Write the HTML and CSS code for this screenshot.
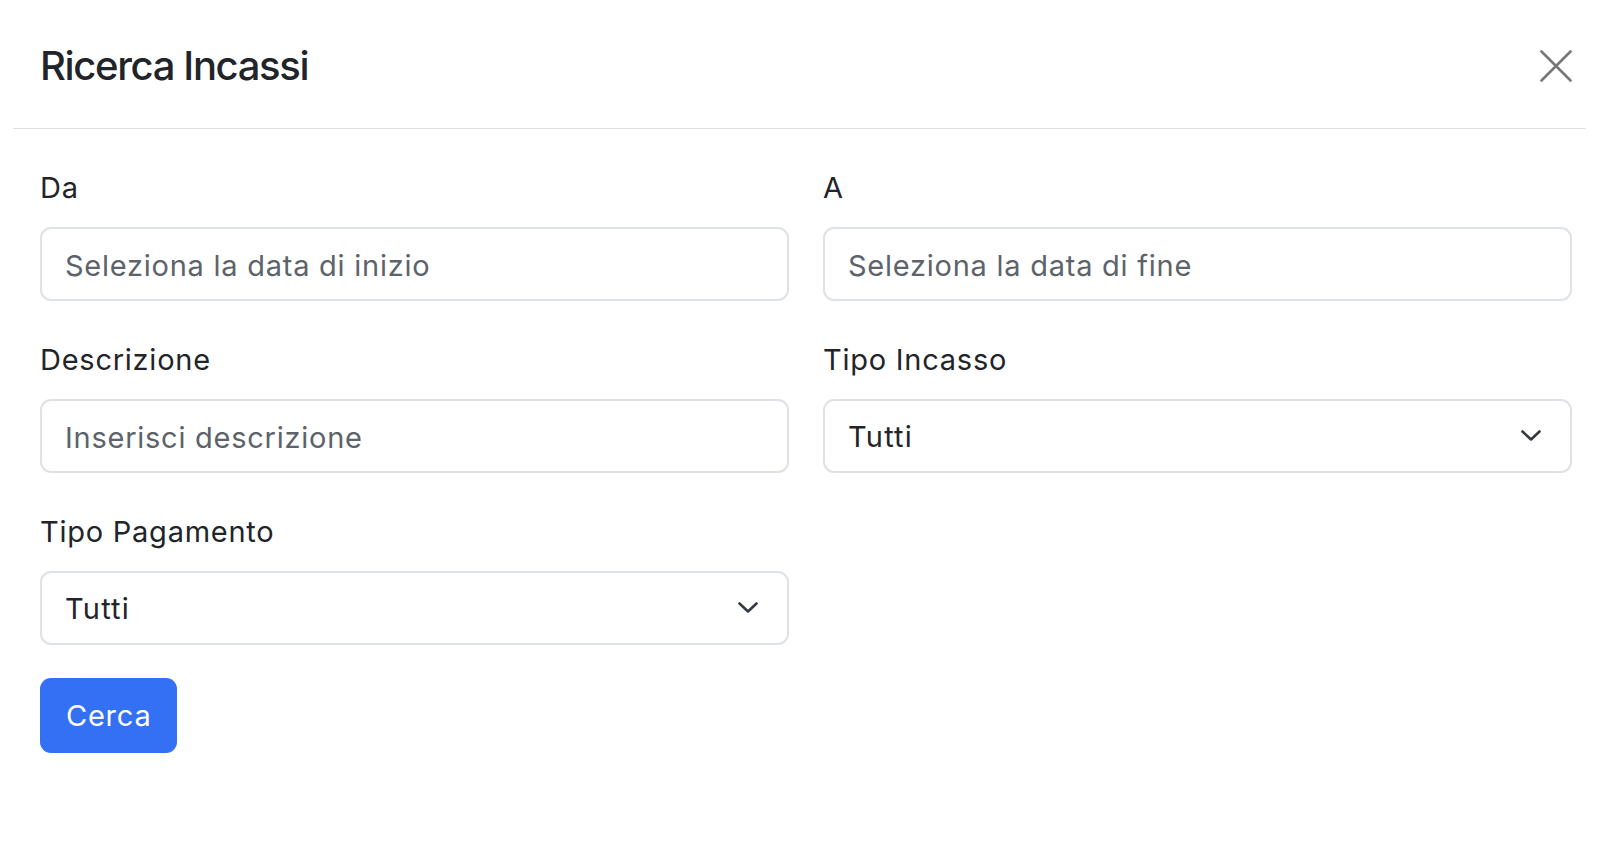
FILE: index.html
```html
<!DOCTYPE html>
<html lang="it">
<head>
<meta charset="utf-8">
<title>Ricerca Incassi</title>
<link rel="stylesheet" href="styles.css">
</head>
<body>
<div class="modal">
  <div class="modal-header">
    <h4 class="modal-title">Ricerca Incassi</h4>
    <button class="btn-close" type="button" aria-label="Chiudi">
      <svg width="32" height="32" viewBox="0 0 32 32"><path d="M1.5 1.5 L30.5 30.5 M30.5 1.5 L1.5 30.5" stroke="#777" stroke-width="2.6" stroke-linecap="round" fill="none"/></svg>
    </button>
  </div>
  <form class="modal-body">
    <div class="grid">
      <div class="field">
        <label class="label">Da</label>
        <input class="control" type="text" placeholder="Seleziona la data di inizio">
      </div>
      <div class="field">
        <label class="label">A</label>
        <input class="control" type="text" placeholder="Seleziona la data di fine">
      </div>
      <div class="field">
        <label class="label">Descrizione</label>
        <input class="control" type="text" placeholder="Inserisci descrizione">
      </div>
      <div class="field">
        <label class="label">Tipo Incasso</label>
        <div class="select-wrap">
          <select class="control select"><option>Tutti</option></select>
          <svg class="chev" width="20" height="11" viewBox="0 0 20 11"><path d="M1.5 1.5 L10 9.5 L18.5 1.5" stroke="#343a40" stroke-width="2.6" stroke-linecap="round" stroke-linejoin="round" fill="none"/></svg>
        </div>
      </div>
      <div class="field">
        <label class="label">Tipo Pagamento</label>
        <div class="select-wrap">
          <select class="control select"><option>Tutti</option></select>
          <svg class="chev" width="20" height="11" viewBox="0 0 20 11"><path d="M1.5 1.5 L10 9.5 L18.5 1.5" stroke="#343a40" stroke-width="2.6" stroke-linecap="round" stroke-linejoin="round" fill="none"/></svg>
        </div>
      </div>
    </div>
    <div class="actions">
      <button class="btn-primary" type="button">Cerca</button>
    </div>
  </form>
</div>
</body>
</html>
```

FILE: styles.css
```css
* { box-sizing: border-box; }
html, body { margin: 0; padding: 0; background: #fff; }
body {
  font-family: Inter, "Liberation Sans", sans-serif;
  color: #212529;
  font-size: 29px;
  letter-spacing: 0.75px;
}
.modal {
  margin: 0 26px 0 13px;
}
.modal-header {
  display: flex;
  align-items: center;
  justify-content: space-between;
  padding: 42px 14px 38px 27px;
  border-bottom: 1px solid #dee2e6;
}
.modal-title {
  margin: 0;
  font-size: 40px;
  line-height: 48px;
  font-weight: 500;
  letter-spacing: -1.35px;
}
.btn-close {
  border: 0;
  background: none;
  padding: 0;
  width: 32px;
  height: 32px;
  display: flex;
}
.modal-body {
  padding: 38px 14px 0 27px;
}
.grid {
  display: grid;
  grid-template-columns: 1fr 1fr;
  column-gap: 34px;
  row-gap: 38px;
}
.field {
  display: flex;
  flex-direction: column;
}
.label {
  font-size: 29px;
  line-height: 42px;
  margin-bottom: 18px;
}
.control {
  width: 100%;
  height: 74px;
  border: 2px solid #dee2e6;
  border-radius: 11px;
  background: #fff;
  font-family: Inter, "Liberation Sans", sans-serif;
  font-size: 29px;
  letter-spacing: 0.75px;
  color: #212529;
  padding: 2px 23px 0 23px;
  outline: none;
  margin: 0;
}
.control::placeholder {
  color: #5c636a;
  opacity: 1;
}
.select-wrap {
  position: relative;
}
.select {
  appearance: none;
  -webkit-appearance: none;
  padding: 0 60px 0 23px;
  letter-spacing: 1.2px;
}
.chev {
  position: absolute;
  right: 31px;
  top: 31px;
  pointer-events: none;
}
.actions {
  margin-top: 33px;
}
.btn-primary {
  height: 75px;
  padding: 0 26px;
  border: 0;
  border-radius: 11px;
  background: #3370f3;
  color: #fff;
  font-family: Inter, "Liberation Sans", sans-serif;
  font-size: 29px;
  letter-spacing: 0.75px;
  line-height: 42px;
}
```
